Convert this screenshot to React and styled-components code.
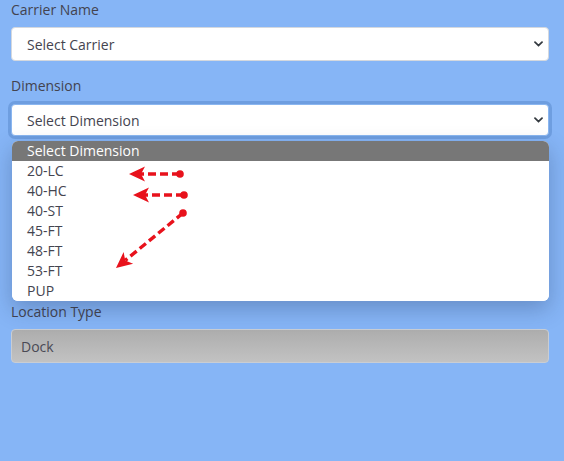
import React from "react";
import styled, { createGlobalStyle } from "styled-components";

const GlobalStyle = createGlobalStyle`
	html, body {
		margin: 0;
		padding: 0;
		background: #86b5f6;
		font-family: "Open Sans", "Noto Sans", sans-serif;
		font-size: 14px;
		color: #44444f;
	}
`;

const dimensions = ["20-LC", "40-HC", "40-ST", "45-FT", "48-FT", "53-FT", "PUP"];

// arrows drawn over the open list, coordinates relative to the list box
const arrows = [
	{ from: [168, 33], to: [117, 33] },
	{ from: [172, 54], to: [121, 54] },
	{ from: [171, 72], to: [104, 127] },
];

const Arrow = ({ from, to }) => {
	const [x1, y1] = from;
	const [x2, y2] = to;
	const len = Math.hypot(x2 - x1, y2 - y1);
	const ux = (x2 - x1) / len;
	const uy = (y2 - y1) / len;
	const px = -uy;
	const py = ux;
	const headLen = 16;
	const bx = x2 - ux * headLen;
	const by = y2 - uy * headLen;
	const nx = x2 - ux * (headLen - 4);
	const ny = y2 - uy * (headLen - 4);
	const head = [
		[x2, y2],
		[bx + px * 7.5, by + py * 7.5],
		[nx, ny],
		[bx - px * 7.5, by - py * 7.5],
	]
		.map((p) => p.join(","))
		.join(" ");

	return (
		<g>
			<circle cx={x1} cy={y1} r={3.8} fill="#e8121c" />
			<line
				x1={x1}
				y1={y1}
				x2={nx}
				y2={ny}
				stroke="#e8121c"
				strokeWidth={3.4}
				strokeDasharray="8 4"
			/>
			<polygon points={head} fill="#e8121c" />
		</g>
	);
};

const Chevron = () => (
	<svg width="9" height="6" viewBox="0 0 9 6">
		<path d="M1 1.2 L4.5 4.6 L8 1.2" fill="none" stroke="#343a40" strokeWidth="1.8" strokeLinecap="round" />
	</svg>
);

const App = () => {
	return (
		<>
			<GlobalStyle />
			<Form>
				<Group>
					<Label>Carrier Name</Label>
					<SelectBox>
						<span>Select Carrier</span>
						<ChevronHold>
							<Chevron />
						</ChevronHold>
					</SelectBox>
				</Group>

				<Group>
					<Label>Dimension</Label>
					<Anchor>
						<SelectBox focused>
							<span>Select Dimension</span>
							<ChevronHold>
								<Chevron />
							</ChevronHold>
						</SelectBox>
						<OptionList>
							<Option selected>Select Dimension</Option>
							{dimensions.map((d) => (
								<Option key={d}>{d}</Option>
							))}
							<Annotations>
								{arrows.map((a, i) => (
									<Arrow key={i} {...a} />
								))}
							</Annotations>
						</OptionList>
					</Anchor>
				</Group>

				{/* fields hidden behind the open list */}
				<Covered h={151} />

				<Group>
					<Label>Location Type</Label>
					<Input disabled>Dock</Input>
				</Group>
			</Form>
		</>
	);
};

export default App;

const Form = styled.div`
	display: flex;
	flex-direction: column;
	padding: 0 15px 0 11px;
	height: 461px;
	box-sizing: border-box;
`;

const Group = styled.div`
	display: flex;
	flex-direction: column;
	margin-bottom: 15px;
`;

const Covered = styled.div`
	height: ${(p) => p.h}px;
	flex-shrink: 0;
`;

const Label = styled.div`
	line-height: 20px;
	height: 20px;
	margin-bottom: 7px;
	color: #43434f;
`;

const Anchor = styled.div`
	position: relative;
`;

const SelectBox = styled.div`
	position: relative;
	box-sizing: border-box;
	height: ${(p) => (p.focused ? "32px" : "34px")};
	margin-top: ${(p) => (p.focused ? "1px" : "0")};
	background: #fff;
	border: 1px solid ${(p) => (p.focused ? "#8ab6f0" : "#d4d8de")};
	border-radius: 4px;
	box-shadow: ${(p) => (p.focused ? "0 0 0 3px #6e9ee0" : "none")};
	display: flex;
	align-items: center;
	padding-left: 15px;
	color: #44444f;
`;

const ChevronHold = styled.div`
	position: absolute;
	right: 5px;
	top: 50%;
	transform: translateY(-50%);
	display: flex;
`;

const OptionList = styled.div`
	position: absolute;
	left: 1px;
	right: 0;
	top: 38px;
	background: #fff;
	border-radius: 6px;
	overflow: hidden;
	box-shadow: 0 8px 22px rgba(20, 40, 80, 0.28);
	z-index: 5;
`;

const Option = styled.div`
	height: 20px;
	line-height: 20px;
	padding-left: 15px;
	background: ${(p) => (p.selected ? "#777777" : "#fff")};
	color: ${(p) => (p.selected ? "#fff" : "#44444f")};
`;

const Annotations = styled.svg`
	position: absolute;
	left: 0;
	top: 0;
	width: 100%;
	height: 100%;
	pointer-events: none;
`;

const Input = styled.div`
	box-sizing: border-box;
	height: 34px;
	border: 1px solid ${(p) => (p.disabled ? "#c9cdd3" : "#d4d8de")};
	border-radius: 4px;
	background: ${(p) => (p.disabled ? "linear-gradient(#adadad, #c2c2c2)" : "#fff")};
	color: #4a4a55;
	display: flex;
	align-items: center;
	padding-left: 9px;
`;
